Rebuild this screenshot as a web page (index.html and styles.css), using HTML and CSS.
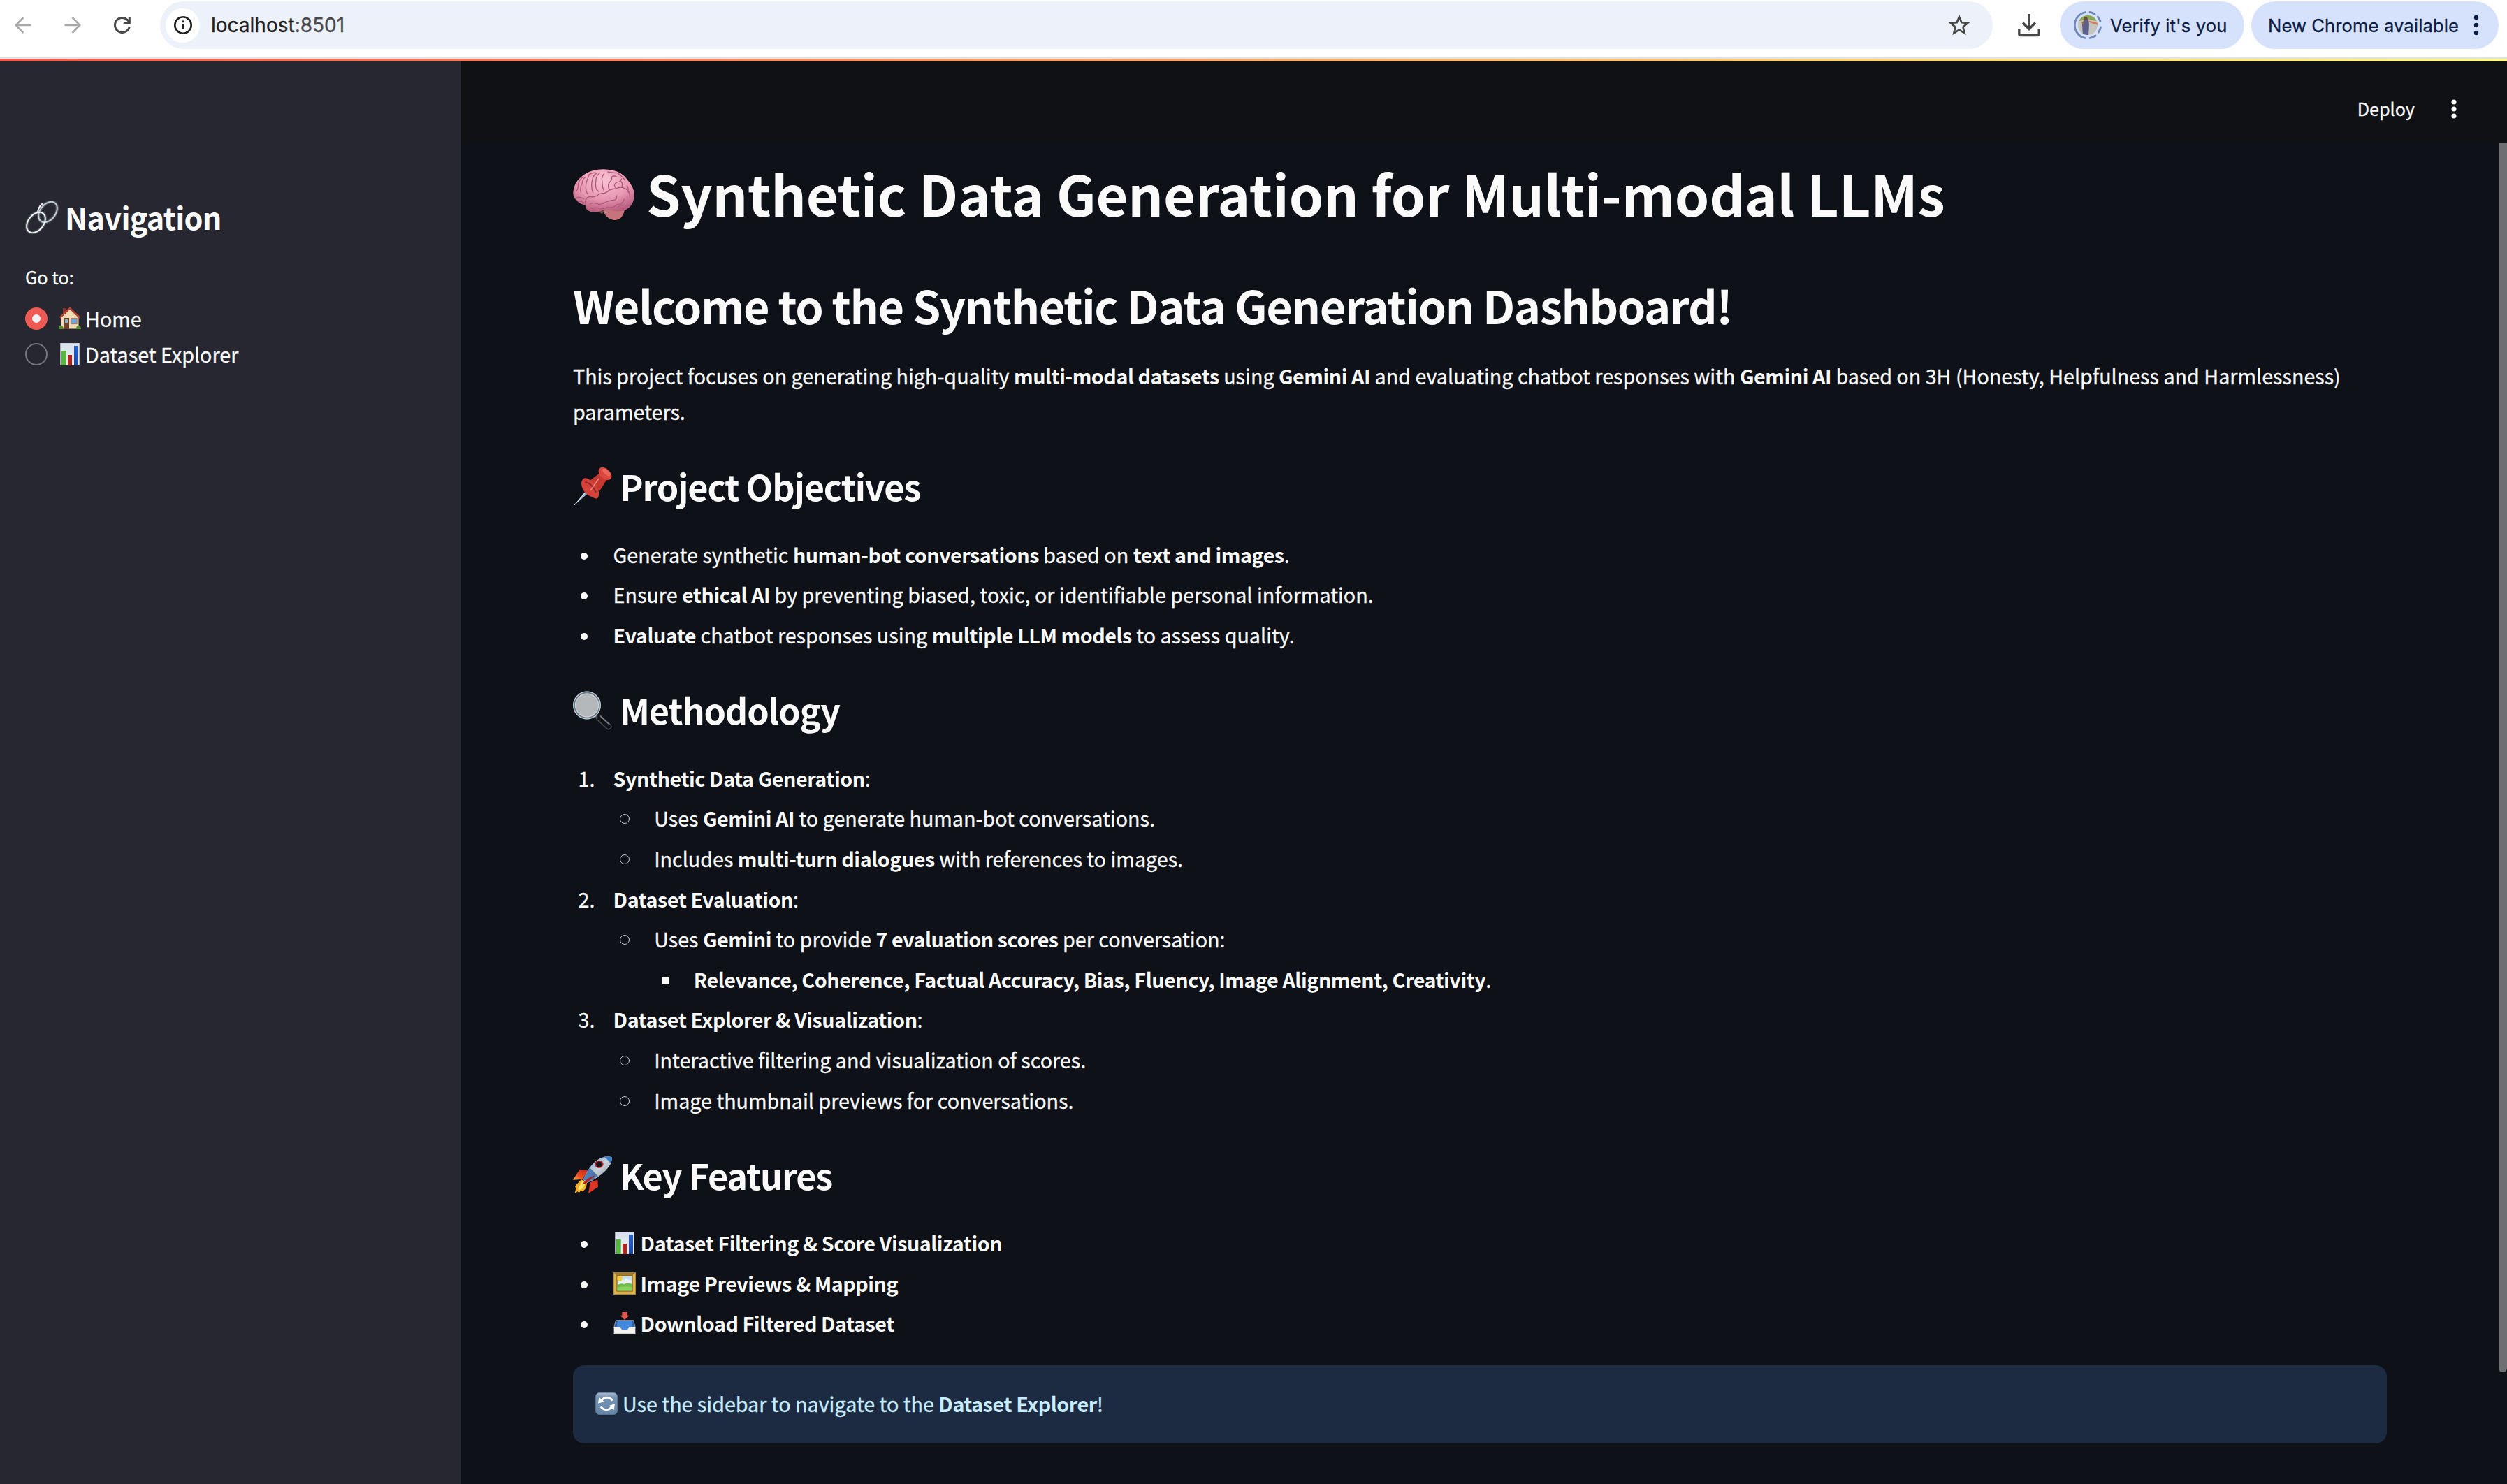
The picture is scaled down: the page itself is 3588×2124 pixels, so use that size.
FILE: index.html
```
<!DOCTYPE html>
<html lang="en">
<head>
<meta charset="utf-8">
<title>Synthetic Data Generation</title>
<link rel="stylesheet" href="styles.css">
</head>
<body>
<svg width="0" height="0" class="defs" aria-hidden="true">
  <defs>
    <linearGradient id="paper" x1="0" y1="0" x2="0" y2="1"><stop offset="0" stop-color="#d5dfeb"/><stop offset="1" stop-color="#eef1f6"/></linearGradient>
    <linearGradient id="blueBar" x1="0" y1="0" x2="0" y2="1"><stop offset="0" stop-color="#2a62cc"/><stop offset="1" stop-color="#1f479f"/></linearGradient>
    <symbol id="chart" viewBox="0 0 96 96">
      <rect x="7" y="0" width="82" height="96" fill="url(#paper)" stroke="#a9b1bc" stroke-width="2"/>
      <rect x="12" y="33" width="20" height="63" fill="#55b53c"/>
      <rect x="39" y="51" width="18" height="45" fill="#b3231f"/>
      <rect x="66" y="12" width="18" height="84" fill="url(#blueBar)"/>
    </symbol>
  </defs>
</svg>

<header class="browser">
  <div class="nav-buttons">
    <svg width="24" height="24" viewBox="0 0 24 24" fill="none" stroke="#a9a9a9" stroke-width="2.6"><path d="M23.500 12H2M12.500 1L1.800 12l10.700 11"/></svg>
    <svg width="24" height="24" viewBox="0 0 24 24" fill="none" stroke="#a9a9a9" stroke-width="2.600"><path d="M.5 12H22M11.500 1l10.700 11-10.700 11"/></svg>
    <svg width="24" height="24" viewBox="0 0 24 24" fill="none" stroke="#474747" stroke-width="3"><path d="M22.300 14A10.500 10.500 0 1 1 19.600 4.700L23 8.200"/><path d="M22.300 0v8.500h-8.500"/></svg>
  </div>
  <div class="address">
    <span class="site-info"><svg width="28" height="28" viewBox="0 0 28 28" fill="none" stroke="#1f1f1f" stroke-width="2.600"><circle cx="14" cy="14" r="11.700"/><path d="M14 12.500v7.500M14 7.600v2.700"/></svg></span>
    <span class="url">localhost<span class="port">:8501</span></span>
    <svg class="star" width="32" height="32" viewBox="0 0 32 32" fill="none" stroke="#474747" stroke-width="2.700"><path d="M16 4l3.400 8.200 8.900.7-6.800 5.800 2.100 8.700L16 22.700l-7.600 4.700 2.100-8.700-6.800-5.800 8.900-.7z"/></svg>
  </div>
  <svg class="download" width="32" height="34" viewBox="0 0 32 34" fill="none" stroke="#474747" stroke-width="3.400"><path d="M16 1v20M7 13.500l9 9 9-9M1.800 23v6.500q0 2 2 2h24.400q2 0 2-2V23"/></svg>
  <div class="chip verify">
    <svg width="42" height="42" viewBox="0 0 42 42">
      <clipPath id="face"><circle cx="21" cy="21" r="14"/></clipPath>
      <g clip-path="url(#face)">
        <rect width="42" height="42" fill="#c4c3bc"/>
        <path d="M6 6h30v9l-9-1-7-2-14 4z" fill="#8aa653"/>
        <path d="M20 14l16 4v3l-16-5z" fill="#d9785a"/>
        <path d="M16 12q2-4 5 0l2 7-1 18h-8l-1-17z" fill="#5b5f8c"/>
        <circle cx="18" cy="11.500" r="2.600" fill="#6b4a3e"/>
        <path d="M12 17l4-3v8z" fill="#9a6a50"/>
      </g>
      <g fill="none" stroke="#7088b8" stroke-width="2.800" stroke-linecap="round">
        <path d="M17.500 2.600A18.800 18.800 0 0 0 17.500 39.500"/>
        <path d="M24 2.500a18.800 18.800 0 0 1 7 2.700M35.300 9a18.800 18.800 0 0 1 3.600 6.500M39.400 24a18.800 18.800 0 0 1-2.800 7M32 36a18.800 18.800 0 0 1-8 3.300"/>
      </g>
    </svg>
    <span>Verify it's you</span>
  </div>
  <div class="chip update">
    <span>New Chrome available</span>
    <svg width="8" height="30" viewBox="0 0 8 30" fill="#0b1c45"><circle cx="4" cy="4" r="3.200"/><circle cx="4" cy="15" r="3.200"/><circle cx="4" cy="26" r="3.200"/></svg>
  </div>
</header>
<div class="decoration"></div>

<div class="app">
  <aside class="sidebar">
    <h2 class="side-title">
      <svg width="48" height="48" viewBox="0 0 48 48" fill="none">
        <g stroke="#4b4e55" stroke-width="4.600"><ellipse cx="32.500" cy="16.500" rx="16.500" ry="11" transform="rotate(-52 32.500 16.500)"/><ellipse cx="15.500" cy="31.500" rx="16.500" ry="11" transform="rotate(-52 15.500 31.500)"/></g>
        <g stroke-width="2"><ellipse cx="32.500" cy="16.500" rx="16.500" ry="11" transform="rotate(-52 32.500 16.500)" stroke="#c7cdd6"/><ellipse cx="15.500" cy="31.500" rx="16.500" ry="11" transform="rotate(-52 15.500 31.500)" stroke="#f0f4fa"/></g>
        <path d="M18 18q0-8 7-14" stroke="#f5f8fc" stroke-width="2"/>
      </svg>
      <span>Navigation</span>
    </h2>
    <div class="radio-label">Go to:</div>
    <div class="radio">
      <span class="dot on"></span>
      <svg width="32" height="32" viewBox="0 0 32 32">
        <path d="M6 1h5v9l-5 5z" fill="#7f3327"/>
        <path d="M3.500 14L16 2l12.500 12v16.500h-25z" fill="#f1dcb6"/>
        <path d="M2 14.500L16 1l14 13.500" fill="none" stroke="#b34136" stroke-width="2.600"/>
        <rect x="7" y="15" width="8" height="16" fill="#70402a"/><rect x="9" y="17" width="4" height="5" fill="#7fb5dc"/>
        <rect x="17.500" y="15.500" width="8.500" height="8" fill="#6ea8dc" stroke="#a47f62" stroke-width="1.200"/>
        <path d="M0 31q0-6 4-5 3 1 3 5zM25 31q0-5 3-5 4 0 4 5z" fill="#5b8f34"/>
      </svg>
      <span>Home</span>
    </div>
    <div class="radio">
      <span class="dot"></span>
      <svg width="32" height="32"><use href="#chart"/></svg>
      <span>Dataset Explorer</span>
    </div>
  </aside>

  <main class="main">
    <div class="toolbar">
      <span>Deploy</span>
      <svg width="8" height="30" viewBox="0 0 8 30" fill="#fafafa"><circle cx="4" cy="5" r="3.500"/><circle cx="4" cy="15" r="3.500"/><circle cx="4" cy="25" r="3.500"/></svg>
    </div>
    <div class="scroll">
      <div class="content">
        <h1>
          <svg class="brain" width="88" height="88" viewBox="30 30 264 264">
            <defs><radialGradient id="pink" cx=".5" cy=".25" r=".75"><stop offset="0" stop-color="#f9c3d3"/><stop offset=".6" stop-color="#e797b1"/><stop offset="1" stop-color="#b95c7f"/></radialGradient></defs>
            <path d="M135 215l20 14 10-14z" fill="#6e4f45"/>
            <path d="M160 212q8 34 42 42 26 4 38-14 10-14 12-30l-30-10z" fill="#c5747b"/>
            <path d="M84 190q-24-2-38-20-16-12-15-34 2-40 32-64 24-22 52-29 40-12 86-2 40 8 62 40 32 34 30 70-2 44-40 62-30 8-60 0-22-6-40 2-40 12-60-2-12-10-9-23z" fill="url(#pink)"/>
            <g fill="none" stroke="#b05a7c" stroke-width="4" stroke-linecap="round" stroke-linejoin="round">
              <path d="M84 190q-6-28 16-36 20 4 34-4 12-12 30-10 16-6 22-14 18-6 30-6 20-12 42 2 14 8 16 26"/>
              <path d="M44 130q10-8 8-30 8-22 22-30M64 136q-6-20 6-40 0-16 12-24M92 142q-16-26 4-72 4-14 14-18M116 138q-12-30 0-66 6-14 18-18M140 132q-16-10-12-40 0-26 16-38M164 130q-10-18-8-40-6-20 8-34M186 124q-8-16 0-30 14-10 10-24 12-8 22 0M214 116q-14-14 6-24 16 0 18-14M240 112q6-18-6-24M262 108q10 12 2 24 14 8 10 26"/>
              <path d="M102 186q14-10 34 0 20 4 34-8 14-4 26-8 24 2 22-20M112 206q20-8 34 0 18 2 34-8 20 8 40-10 24 0 30-22M222 200q12-14 22-8M40 162q14-12 36 2M52 176q10-6 22 2M98 62q12-12 30-10M180 48q24 6 40 4 26 18 34 34"/>
            </g>
          </svg>
          <span>Synthetic Data Generation for Multi-modal LLMs</span>
        </h1>
        <h2>Welcome to the Synthetic Data Generation Dashboard!</h2>
        <p>This project focuses on generating high-quality <b>multi-modal datasets</b> using <b>Gemini AI</b> and evaluating chatbot responses with <b>Gemini AI</b> based on 3H (Honesty, Helpfulness and Harmlessness) parameters.</p>

        <h3>
          <svg width="56" height="56" viewBox="0 0 56 56">
            <path d="M1 55l21-26 4 4z" fill="#9db0c8"/>
            <path d="M1 55l22-25" stroke="#e4edf8" stroke-width="1"/>
            <path d="M40 7l10 8-12 19-17-13z" fill="#c6382f"/>
            <path d="M12 23q1-10 9-7 13 6 16 19 1 12-6 9-18-6-19-21z" fill="#d5423a"/>
            <path d="M17 21q10 1 16 15" fill="none" stroke="#93292a" stroke-width="2"/>
            <ellipse cx="46" cy="9" rx="11" ry="7" transform="rotate(42 46 9)" fill="#d9473f"/>
            <ellipse cx="48" cy="7" rx="7" ry="3.500" transform="rotate(42 48 7)" fill="#e8665c"/>
            <path d="M25 33l12-17" stroke="#e78a86" stroke-width="1.500"/>
          </svg>
          <span>Project Objectives</span>
        </h3>
        <ul class="disc">
          <li>Generate synthetic <b>human-bot conversations</b> based on <b>text and images</b>.</li>
          <li>Ensure <b>ethical AI</b> by preventing biased, toxic, or identifiable personal information.</li>
          <li><b>Evaluate</b> chatbot responses using <b>multiple LLM models</b> to assess quality.</li>
        </ul>

        <h3>
          <svg width="56" height="56" viewBox="0 0 56 56">
            <path d="M32 34l5 5" stroke="#9ea5ac" stroke-width="4"/>
            <path d="M37 38l14 13" stroke="#4a4d52" stroke-width="9" stroke-linecap="round"/>
            <path d="M37 38l14 13" stroke="#101114" stroke-width="6" stroke-linecap="round"/>
            <path d="M39 36l13 12" stroke="#85888d" stroke-width="1.200"/>
            <circle cx="20" cy="20.500" r="18.500" fill="#b5b8bb" stroke="#6f7a84" stroke-width="3"/>
            <circle cx="20" cy="20.500" r="19.300" fill="none" stroke="#bfd0df" stroke-width="1.200"/>
            <circle cx="20" cy="20.500" r="16.500" fill="none" stroke="#d4d8dc" stroke-width="1"/>
          </svg>
          <span>Methodology</span>
        </h3>
        <ol class="number">
          <li><b>Synthetic Data Generation</b>:
            <ul class="ring">
              <li>Uses <b>Gemini AI</b> to generate human-bot conversations.</li>
              <li>Includes <b>multi-turn dialogues</b> with references to images.</li>
            </ul>
          </li>
          <li><b>Dataset Evaluation</b>:
            <ul class="ring">
              <li>Uses <b>Gemini</b> to provide <b>7 evaluation scores</b> per conversation:
                <ul class="square">
                  <li><b>Relevance, Coherence, Factual Accuracy, Bias, Fluency, Image Alignment, Creativity</b>.</li>
                </ul>
              </li>
            </ul>
          </li>
          <li><b>Dataset Explorer &amp; Visualization</b>:
            <ul class="ring">
              <li>Interactive filtering and visualization of scores.</li>
              <li>Image thumbnail previews for conversations.</li>
            </ul>
          </li>
        </ol>

        <h3>
          <svg width="56" height="56" viewBox="30 33 168 168">
            <defs>
              <linearGradient id="hull" x1="0" y1="0" x2="1" y2="1"><stop offset="0" stop-color="#5b92cf"/><stop offset=".5" stop-color="#c9d5df"/><stop offset="1" stop-color="#777f87"/></linearGradient>
              <linearGradient id="fin" x1="1" y1="0" x2="0" y2="1"><stop offset="0" stop-color="#c8201a"/><stop offset=".6" stop-color="#ea4d25"/><stop offset="1" stop-color="#f9b53c"/></linearGradient>
            </defs>
            <path d="M96 94l-38-3-28 43 40-2z" fill="url(#fin)"/>
            <path d="M104 144l32-10 2 30-42 28z" fill="#dc3526"/>
            <path d="M66 132l24 16-4 22-14 14-8-4-8 10-6-6-12 8 5-22-4-8 12-14z" fill="#f7b02c"/>
            <path d="M70 138l14 10-12 22-16 8-4-6z" fill="#ffe86a"/>
            <path d="M197 37q-30-10-66 14-28 22-48 62-8 14-8 22l16 12q24-10 44-24 40-26 56-56 8-18 6-30z" fill="url(#hull)"/>
            <path d="M197 37q-16-6-34-2 14 8 28 28 8-14 6-26z" fill="#3b7cc6"/>
            <path d="M102 82l36 36-44 28-20-14z" fill="#4c7db5"/>
            <path d="M102 82q18 12 36 36" fill="none" stroke="#d7b86c" stroke-width="2"/>
            <path d="M126 114q-14 12-26 24-16 14-30 16 16-28 56-40z" fill="#b72020"/>
            <ellipse cx="142" cy="67" rx="19" ry="17" fill="#ba2a2c"/><ellipse cx="142" cy="67" rx="13" ry="12" fill="#15171c"/>
          </svg>
          <span>Key Features</span>
        </h3>
        <ul class="disc">
          <li><svg class="emoji" width="32" height="32"><use href="#chart"/></svg><b>Dataset Filtering &amp; Score Visualization</b></li>
          <li><svg class="emoji" width="32" height="32" viewBox="0 0 96 96">
            <rect width="96" height="96" fill="#b5872a"/><rect x="3" y="3" width="90" height="90" fill="#e0b348"/><path d="M0 0h96L80 16H16z" fill="#a67a26"/>
            <rect x="13" y="13" width="70" height="70" fill="#8d6420"/><rect x="17" y="17" width="62" height="62" fill="#bfe2ef"/>
            <circle cx="27" cy="27" r="11" fill="#f6cf3d"/><path d="M20 46q6-12 14-6 4-14 12-4 6-18 16-4 12-6 17 14v6H17z" fill="#edf2f5"/>
            <path d="M17 55q14-10 28-4 18-8 34 0v28H17z" fill="#6fc04a"/><path d="M17 66q28-10 62-2v15H17z" fill="#8bd35e"/>
          </svg><b>Image Previews &amp; Mapping</b></li>
          <li><svg class="emoji" width="32" height="32" viewBox="0 0 96 96">
            <path d="M10 35h76l8 32H2z" fill="#2c5ea5" stroke="#d3d2cf" stroke-width="2"/><path d="M18 39h60l5 28-34 20-36-20z" fill="#4388e0"/>
            <path d="M2 64h27q4 14 19 14t19-14h27v31H2z" fill="#f1f0ec"/><path d="M2 90h92v5H2z" fill="#d6d4cf"/>
            <path d="M37 0h22v14h8L48 33 29 14h8z" fill="#e2574c"/>
          </svg><b>Download Filtered Dataset</b></li>
        </ul>

        <div class="alert">
          <svg class="emoji" width="32" height="32" viewBox="0 0 96 96">
            <defs><linearGradient id="key" x1="0" y1="0" x2="0" y2="1"><stop offset="0" stop-color="#a9bdd2"/><stop offset=".2" stop-color="#7592b3"/><stop offset="1" stop-color="#6584a6"/></linearGradient></defs>
            <rect x="1" y="1" width="94" height="94" rx="17" fill="url(#key)" stroke="#59718c" stroke-width="2"/>
            <g fill="none" stroke="#fff" stroke-width="9"><path d="M24 37q12-17 28-15 14 1 21 13"/><path d="M73 59q-12 17-28 15-14-1-21-13"/></g>
            <path d="M12 47l4-27 22 19zM84 49l-4 27-22-19z" fill="#fff"/>
          </svg><span>Use the sidebar to navigate to the <b>Dataset Explorer</b>!</span>
        </div>
      </div>
      <div class="scrollbar"></div>
    </div>
  </main>
</div>
</body>
</html>
```
FILE: styles.css
```
* { box-sizing: border-box; }
body {
  margin: 0;
  height: 2124px;
  display: flex;
  flex-direction: column;
  overflow: hidden;
  background: #0e1118;
  color: #fafafa;
  font: 400 28.7px/51.2px "Noto Sans CJK SC", "Noto Sans", sans-serif;
  -webkit-text-stroke: 0.3px currentColor;
}
svg { display: block; flex: none; }
.defs { position: absolute; }
h1, h2, h3, p, ul, ol { margin: 0; padding: 0; }
h1, h2, h3, b { -webkit-text-stroke: 0; }
b { font-weight: 700; letter-spacing: -0.0155em; }

/* Browser toolbar */
.browser {
  height: 84px;
  flex: none;
  display: flex;
  align-items: flex-start;
  padding: 2px 12px 0 21px;
  background: #fff;
  border-bottom: 2px solid #e0e3e1;
  font-family: Inter, sans-serif;
}
.nav-buttons { display: flex; gap: 47px; padding-top: 22px; width: 208px; }
.address {
  width: 2623px;
  height: 68px;
  display: flex;
  align-items: center;
  padding: 0 32px 0 8px;
  border-radius: 34px;
  background: #edf2fa;
}
.site-info {
  width: 49px;
  height: 49px;
  display: flex;
  align-items: center;
  justify-content: center;
  border-radius: 50%;
  background: #fff;
}
.url { margin-left: 16px; padding-top: 1px; font-size: 28px; color: #1f1f1f; }
.port { color: #4a4a4c; }
.star { margin-left: auto; }
.download { margin: 17px 28px 0 36px; }
.chip {
  height: 68px;
  display: flex;
  align-items: center;
  border-radius: 34px;
  background: #d6e2fb;
  color: #0b1c45;
  font-size: 25.600px;
  font-weight: 400;
  letter-spacing: 0.1px;
  white-space: nowrap;
}
.chip span { padding-top: 1px; }
.verify { width: 264px; padding-left: 19px; gap: 11px; margin-right: 10px; }
.update { width: 354px; padding: 0 28px 0 24px; justify-content: space-between; }
.decoration { height: 4px; flex: none; background: linear-gradient(90deg, #ed5a50, #fdfa8c); }

.app { flex: 1; display: flex; min-height: 0; }

/* Sidebar */
.sidebar { width: 660px; flex: none; padding: 194px 36px 0; background: #262730; }
.side-title {
  display: flex;
  align-items: center;
  gap: 9px;
  font-size: 43.200px;
  line-height: 57.600px;
  letter-spacing: -0.018em;
}
.radio-label { margin-top: 34px; font-size: 25.200px; line-height: 44.800px; }
.radio-label + .radio { margin-top: 12px; }
.radio { display: flex; align-items: center; height: 51px; }
.radio svg { margin: 0 6px 0 16px; }
.dot { width: 32px; height: 32px; margin-top: 1px; border-radius: 50%; border: 2px solid #76777d; }
.dot.on { border: 10px solid #ee5a54; background: #f0f2f6; }

/* Main area */
.main { flex: 1; display: flex; flex-direction: column; }
.toolbar {
  height: 116px;
  flex: none;
  display: flex;
  align-items: center;
  justify-content: flex-end;
  gap: 52px;
  padding: 20px 72px 0 0;
  background: #0f1115;
  font-size: 25.200px;
}
.scroll { flex: 1; display: flex; }
.content { width: 2756px; padding: 19px 0 0 160px; }
.scrollbar { width: 12px; height: 1760px; margin-left: auto; border-radius: 0 0 6px 6px; background: #6e6f73; }

h1, h3 { display: flex; align-items: center; }
h1 { font-size: 79.200px; line-height: 105.600px; gap: 17px; letter-spacing: -0.0025em; }
.brain { margin-top: 16px; }
h2 { font-size: 64.800px; line-height: 86.400px; letter-spacing: -0.022em; }
h1 + h2 { margin-top: 64px; }
h2 + p { margin-top: 33px; }
h3 { margin: 43.800px 0 35.200px; gap: 11px; font-size: 50.400px; line-height: 67.200px; letter-spacing: -0.023em; }
h3 svg { margin-top: 3px; }
h3 span { padding-top: 1px; }
p + h3 { margin-top: 47px; }

li { list-style: none; margin-left: 57.600px; line-height: 57.600px; }
li::before { content: ""; display: inline-block; }
.disc > li::before {
  width: 10px;
  height: 10px;
  margin: 0 37px 0 -47px;
  vertical-align: 5px;
  border-radius: 50%;
  background: #fafafa;
}
.number { counter-reset: step; }
.number > li { counter-increment: step; }
.number > li::before { content: counter(step) "."; width: 50px; margin-left: -50px; }
.ring > li::before {
  width: 12px;
  height: 12px;
  margin: 0 35px 0 -48px;
  vertical-align: 4px;
  border: 1.200px solid #c8c8ca;
  border-radius: 50%;
}
.square > li::before { width: 10px; height: 10px; margin: 0 35px 0 -45px; vertical-align: 5px; background: #fafafa; }
.emoji { display: inline-block; margin-right: 7px; vertical-align: -4px; }

.alert {
  height: 112px;
  margin-top: 30.800px;
  padding: 29px 32px;
  border-radius: 16px;
  background: #1c2b41;
  color: #c7ebff;
}
```
